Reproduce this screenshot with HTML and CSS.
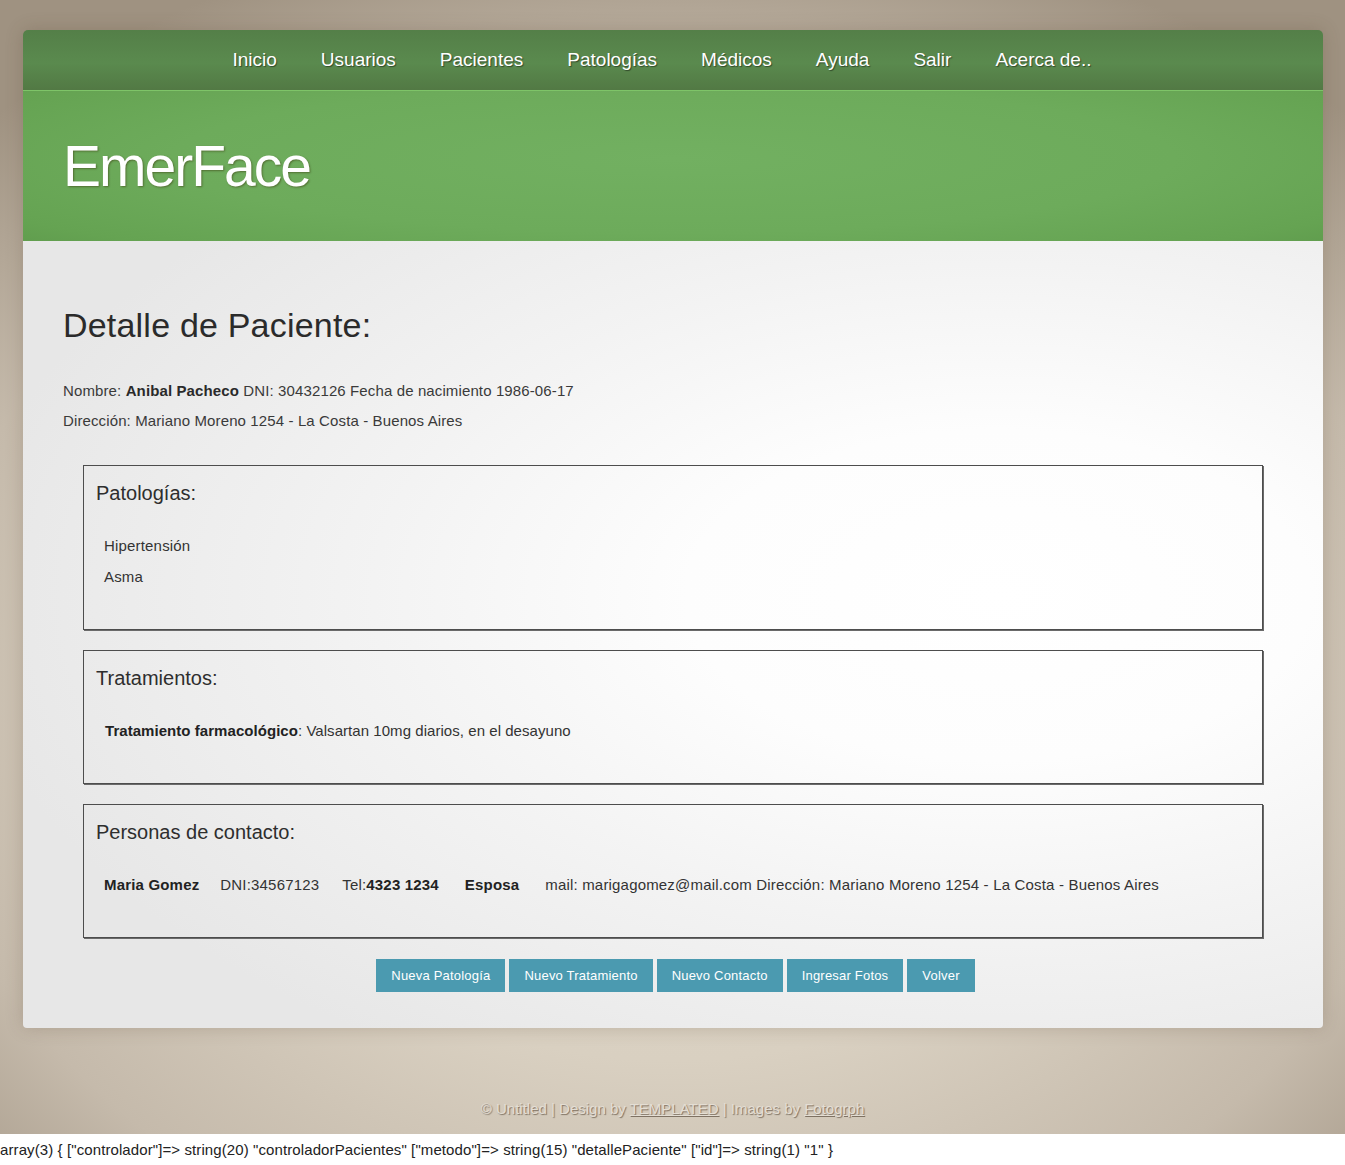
FILE: index.html
```html
<!DOCTYPE html>
<html lang="es">
<head>
<meta charset="utf-8">
<title>EmerFace - Detalle de Paciente</title>
<link rel="stylesheet" href="styles.css">
</head>
<body>
<div class="page">
  <div class="wrapper">
    <nav class="nav">
      <a href="#">Inicio</a>
      <a href="#">Usuarios</a>
      <a href="#">Pacientes</a>
      <a href="#">Patologías</a>
      <a href="#">Médicos</a>
      <a href="#">Ayuda</a>
      <a href="#">Salir</a>
      <a href="#">Acerca de..</a>
    </nav>
    <header class="header">
      <h1 class="logo">EmerFace</h1>
    </header>
    <main class="content">
      <h2 class="page-title">Detalle de Paciente:</h2>
      <p class="info info-first">Nombre: <b>Anibal Pacheco</b> DNI: 30432126 Fecha de nacimiento 1986-06-17</p>
      <p class="info">Dirección: Mariano Moreno 1254 - La Costa - Buenos Aires</p>

      <section class="box">
        <h3 class="box-title">Patologías:</h3>
        <ul class="box-list">
          <li>Hipertensión</li>
          <li>Asma</li>
        </ul>
      </section>

      <section class="box">
        <h3 class="box-title">Tratamientos:</h3>
        <ul class="box-list">
          <li class="shift"><b>Tratamiento farmacológico</b>: Valsartan 10mg diarios, en el desayuno</li>
        </ul>
      </section>

      <section class="box">
        <h3 class="box-title">Personas de contacto:</h3>
        <ul class="box-list">
          <li><span class="c c1"><b>Maria Gomez</b></span><span class="c c2">DNI:34567123</span><span class="c c3">Tel:<b>4323 1234</b></span><span class="c c4"><b>Esposa</b></span><span class="c">mail: marigagomez@mail.com Dirección: Mariano Moreno 1254 - La Costa - Buenos Aires</span></li>
        </ul>
      </section>

      <div class="actions">
        <a class="btn" href="#">Nueva Patología</a>
        <a class="btn" href="#">Nuevo Tratamiento</a>
        <a class="btn" href="#">Nuevo Contacto</a>
        <a class="btn" href="#">Ingresar Fotos</a>
        <a class="btn" href="#">Volver</a>
      </div>
    </main>
  </div>
  <footer class="footer">© Untitled | Design by <a href="#">TEMPLATED</a> | Images by <a href="#">Fotogrph</a></footer>
</div>
<div class="debug">array(3) { ["controlador"]=&gt; string(20) "controladorPacientes" ["metodo"]=&gt; string(15) "detallePaciente" ["id"]=&gt; string(1) "1" }</div>
</body>
</html>
```

FILE: styles.css
```css
html, body {
  margin: 0;
  padding: 0;
  background: #fff;
}

body {
  font-family: "Liberation Sans", Arial, sans-serif;
  color: #333;
}

.page {
  padding-top: 30px;
  background:
    radial-gradient(ellipse 75% 70% at 50% 62%, #e2dacb 0%, #d9d0c1 45%, #c5baab 75%, #9f9281 100%);
}

.wrapper {
  width: 1300px;
  margin: 0 0 0 23px;
  box-shadow: 0 0 18px rgba(80, 60, 40, 0.22);
  border-radius: 5px;
}

.nav {
  height: 60px;
  display: flex;
  justify-content: center;
  padding-right: 22px;
  background: linear-gradient(#547f48 0%, #5a8a4e 55%, #527944 100%);
  border-radius: 5px 5px 0 0;
  border-bottom: 1px solid #7ec468;
}

.nav a {
  display: block;
  padding: 0 22px;
  line-height: 60px;
  font-size: 19px;
  color: #fff;
  text-decoration: none;
  text-shadow: 1px 1px 1px rgba(0, 0, 0, 0.45);
}

.header {
  height: 150px;
  display: flex;
  align-items: center;
  padding: 2px 0 0 40px;
  box-sizing: border-box;
  background: radial-gradient(ellipse 70% 90% at 50% 45%, #72b061 0%, #6dab5b 55%, #65a352 85%, #5e9a4c 100%);
}

.logo {
  margin: 0;
  font-size: 57px;
  font-weight: normal;
  letter-spacing: -2px;
  color: #fff;
  line-height: 1.15;
  text-shadow: 1px 1px 2px rgba(50, 40, 0, 0.45);
}

.content {
  padding: 64px 40px 36px 40px;
  border-radius: 0 0 4px 4px;
  background: radial-gradient(ellipse 80% 70% at 75% 45%, #ffffff 0%, #fdfdfd 30%, #f3f3f3 60%, #e7e7e7 100%);
}

.page-title {
  margin: 0;
  font-size: 34px;
  line-height: 40px;
  font-weight: normal;
  letter-spacing: 0.2px;
  color: #2b2b2b;
}

.info {
  margin: 0;
  font-size: 15px;
  line-height: 30px;
  letter-spacing: 0.12px;
  color: #3a3a3a;
}

.info-first {
  margin-top: 31px;
}

.info b {
  color: #2a2a2a;
}

.box {
  margin: 29px 20px 0 20px;
  padding: 11px 12px;
  border: 1px solid #4d4d4d;
  box-shadow: 1px 1px 0 #6a6a6a;
}

.box + .box {
  margin-top: 20px;
}

.box-title {
  margin: 0;
  font-size: 20px;
  line-height: 32px;
  font-weight: normal;
  color: #2e2e2e;
}

.box-list {
  list-style: none;
  margin: 21px 0 26px 0;
  padding: 0 0 0 8px;
}

.box-list li {
  font-size: 15px;
  line-height: 31px;
  letter-spacing: 0.18px;
  color: #333;
  white-space: nowrap;
}

.box-list li.shift {
  padding-left: 1px;
  letter-spacing: 0.05px;
}

.box-list b {
  color: #222;
}

.c1 { margin-right: 21px; }
.c2 { margin-right: 23px; }
.c3 { margin-right: 26px; }
.c4 { margin-right: 26px; }

.actions {
  margin-top: 21px;
  display: flex;
  justify-content: center;
  gap: 4px;
  padding-left: 5px;
}

.btn {
  display: block;
  height: 33px;
  line-height: 33px;
  padding: 0 15px;
  font-size: 13px;
  letter-spacing: 0.2px;
  color: #fff;
  text-decoration: none;
  background: #4b9ab0;
}

.footer {
  padding: 71px 0 15px 0;
  line-height: 20px;
  font-size: 15px;
  text-align: center;
  color: #e4ded4;
  text-shadow: 1px 1px 1px rgba(70, 55, 40, 0.6);
}

.footer a {
  color: #e4ded4;
  text-decoration: underline;
}

.debug {
  padding-top: 8px;
  font-size: 15px;
  line-height: 16px;
  letter-spacing: 0.1px;
  color: #222;
}
```
